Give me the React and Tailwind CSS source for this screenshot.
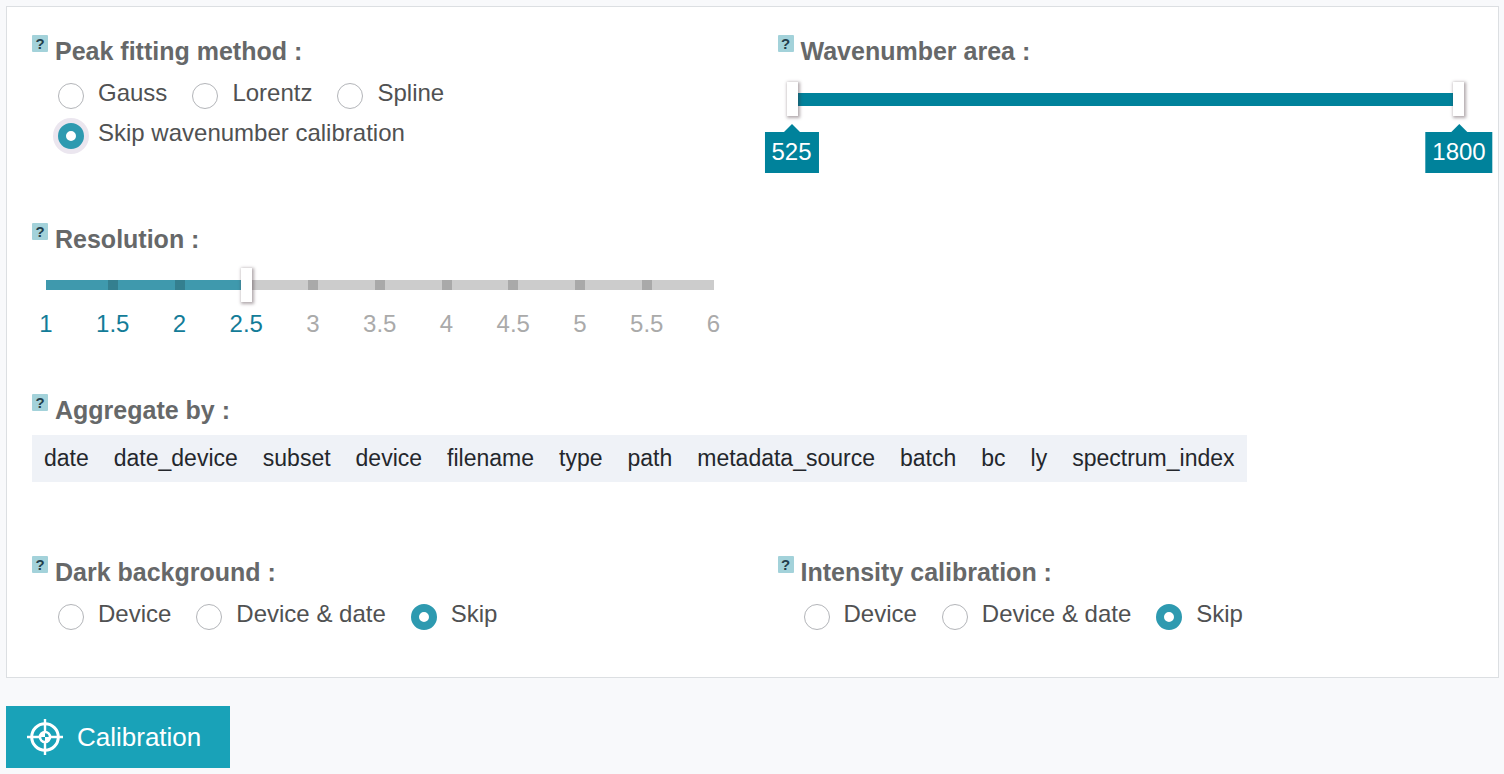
import { useState } from "react";

const THUMB =
  "appearance-none bg-transparent outline-none [&::-webkit-slider-thumb]:pointer-events-auto [&::-webkit-slider-thumb]:h-[34px] [&::-webkit-slider-thumb]:w-[11px] [&::-webkit-slider-thumb]:appearance-none [&::-webkit-slider-thumb]:bg-white [&::-webkit-slider-thumb]:shadow-[1px_1px_3px_1px_rgba(60,40,50,0.4)]";

function Heading({ id, children }) {
  return (
    <div className="flex items-start gap-[7px]">
      <button
        type="button"
        aria-label="Help"
        className="flex h-[17px] w-4 shrink-0 items-center justify-center rounded-[1px] bg-[#a3d2da] text-[15px] font-bold leading-none text-[#233f4c]"
      >
        ?
      </button>
      <h2 id={id} className="text-[25px] font-bold leading-8 text-[#666869]">
        {children} :
      </h2>
    </div>
  );
}

function RadioGroup({ name, title, options, initial, focused }) {
  const [value, setValue] = useState(initial);
  return (
    <section className="px-[25px]">
      <Heading id={name}>{title}</Heading>
      <div
        role="radiogroup"
        aria-labelledby={name}
        className="mt-[6px] flex flex-wrap gap-x-[25px] pl-[26px] text-2xl leading-10 text-[#505152]"
      >
        {options.map((option) => (
          <label key={option} className="flex items-start gap-[14px]">
            <input
              type="radio"
              name={name}
              checked={value === option}
              onChange={() => setValue(option)}
              className={
                "mt-[10px] size-[26px] shrink-0 appearance-none rounded-full border border-[#b3b5b9] bg-white checked:border-8 checked:border-[#2e9ab0]" +
                (focused ? " checked:ring-[5px] checked:ring-[#ebe6ef]" : "")
              }
            />
            {option}
          </label>
        ))}
      </div>
    </section>
  );
}

function Bubble({ at, children }) {
  return (
    <output
      className="absolute top-[42px] flex -translate-x-1/2 flex-col items-center"
      style={{ left: `${at}%` }}
    >
      <span className="border-x-8 border-b-8 border-x-transparent border-b-[#00829b]" />
      <span className="bg-[#00829b] px-[7px] pb-[2px] text-2xl leading-[39px] text-white">{children}</span>
    </output>
  );
}

function WavenumberRange() {
  const min = 525;
  const max = 1800;
  const [low, setLow] = useState(min);
  const [high, setHigh] = useState(max);
  const percent = (v) => ((v - min) / (max - min)) * 100;
  const input = "pointer-events-none absolute inset-y-0 -left-[5px] w-[calc(100%+10px)] " + THUMB;
  return (
    <section className="px-[25px]">
      <Heading id="area">Wavenumber area</Heading>
      <div className="relative mx-[14px] mt-[15px] flex h-[34px] items-center">
        <div className="h-[13px] w-full bg-[#ccc]">
          <div
            className="h-full bg-[#00829b]"
            style={{ marginLeft: `${percent(low)}%`, width: `${percent(high) - percent(low)}%` }}
          />
        </div>
        <input
          type="range"
          aria-label="Lowest wavenumber"
          min={min}
          max={max}
          value={low}
          onChange={(e) => setLow(Math.min(Number(e.target.value), high))}
          className={input}
        />
        <input
          type="range"
          aria-label="Highest wavenumber"
          min={min}
          max={max}
          value={high}
          onChange={(e) => setHigh(Math.max(Number(e.target.value), low))}
          className={input}
        />
        <Bubble at={percent(low)}>{low}</Bubble>
        <Bubble at={percent(high)}>{high}</Bubble>
      </div>
    </section>
  );
}

const STEPS = [1, 1.5, 2, 2.5, 3, 3.5, 4, 4.5, 5, 5.5, 6];

function ResolutionSlider() {
  const [value, setValue] = useState(2.5);
  return (
    <section className="px-[25px]">
      <Heading id="resolution">Resolution</Heading>
      <div className="mx-[14px]">
        <div className="relative mt-[13px] flex h-[34px] items-center">
          <div className="h-[10px] w-full bg-[#ccc]">
            <div className="h-full bg-[#3f99ad]" style={{ width: `${(value - 1) * 20}%` }} />
          </div>
          <div className="absolute inset-x-0 top-3 flex justify-between">
            {STEPS.map((step, i) => (
              <span key={step} className="flex h-[10px] w-0 justify-center">
                {i > 0 && i < STEPS.length - 1 && <span className="w-[10px] shrink-0 bg-black/17" />}
              </span>
            ))}
          </div>
          <input
            type="range"
            aria-labelledby="resolution"
            min={1}
            max={6}
            step={0.5}
            value={value}
            onChange={(e) => setValue(Number(e.target.value))}
            className={"absolute inset-y-0 -left-[5px] w-[calc(100%+10px)] " + THUMB}
          />
        </div>
        <div className="mt-[6px] flex justify-between text-2xl leading-8">
          {STEPS.map((step) => (
            <span
              key={step}
              className={"flex w-0 justify-center " + (step <= value ? "text-[#137c98]" : "text-[#aaa]")}
            >
              {step}
            </span>
          ))}
        </div>
      </div>
    </section>
  );
}

const FIELDS = [
  "date",
  "date_device",
  "subset",
  "device",
  "filename",
  "type",
  "path",
  "metadata_source",
  "batch",
  "bc",
  "ly",
  "spectrum_index",
];

function AggregateBy() {
  const [picked, setPicked] = useState([]);
  const toggle = (field) =>
    setPicked(picked.includes(field) ? picked.filter((f) => f !== field) : [...picked, field]);
  return (
    <section className="px-[25px]">
      <Heading id="aggregate">Aggregate by</Heading>
      <div
        role="group"
        aria-labelledby="aggregate"
        className="mt-[9px] flex w-fit flex-wrap gap-x-px bg-[#eff2f7] text-[23px] leading-[47px] text-[#24272c]"
      >
        {FIELDS.map((field) => (
          <button
            key={field}
            type="button"
            aria-pressed={picked.includes(field)}
            onClick={() => toggle(field)}
            className="px-3 aria-pressed:bg-[#d5dde8]"
          >
            {field}
          </button>
        ))}
      </div>
    </section>
  );
}

function TargetIcon() {
  return (
    <svg viewBox="0 0 36 36" className="size-9" fill="none" stroke="currentColor" aria-hidden="true">
      <circle cx="18" cy="18" r="13.3" strokeWidth="3" />
      <path d="M18 0v12M18 24v12M0 18h12M24 18h12" strokeWidth="2.4" />
      <circle cx="18" cy="18" r="5" strokeWidth="2.6" />
      <path d="M18 18v-5a5 5 0 0 0-5 5zM18 18v5a5 5 0 0 0 5-5z" fill="currentColor" stroke="none" />
    </svg>
  );
}

export default function App() {
  return (
    <main className="min-h-screen bg-[#f8f9fb] py-[6px] pr-[5px] pl-[6px] font-['Liberation_Sans',Arial,sans-serif]">
      <div className="border border-[#dcdfe2] bg-white pt-7 pb-[43px]">
        <div className="grid grid-cols-2">
          <RadioGroup
            name="fitting"
            title="Peak fitting method"
            options={["Gauss", "Lorentz", "Spline", "Skip wavenumber calibration"]}
            initial="Skip wavenumber calibration"
            focused
          />
          <WavenumberRange />
        </div>
        <div className="mt-[70px] grid grid-cols-2">
          <ResolutionSlider />
        </div>
        <div className="mt-[54px]">
          <AggregateBy />
        </div>
        <div className="mt-[74px] grid grid-cols-2">
          <RadioGroup
            name="dark"
            title="Dark background"
            options={["Device", "Device & date", "Skip"]}
            initial="Skip"
          />
          <RadioGroup
            name="intensity"
            title="Intensity calibration"
            options={["Device", "Device & date", "Skip"]}
            initial="Skip"
          />
        </div>
      </div>
      <button
        type="button"
        className="mt-7 flex h-[62px] items-center gap-[14px] bg-[#19a2b8] pr-[29px] pl-[21px] text-[26px] text-white"
      >
        <TargetIcon />
        Calibration
      </button>
    </main>
  );
}
